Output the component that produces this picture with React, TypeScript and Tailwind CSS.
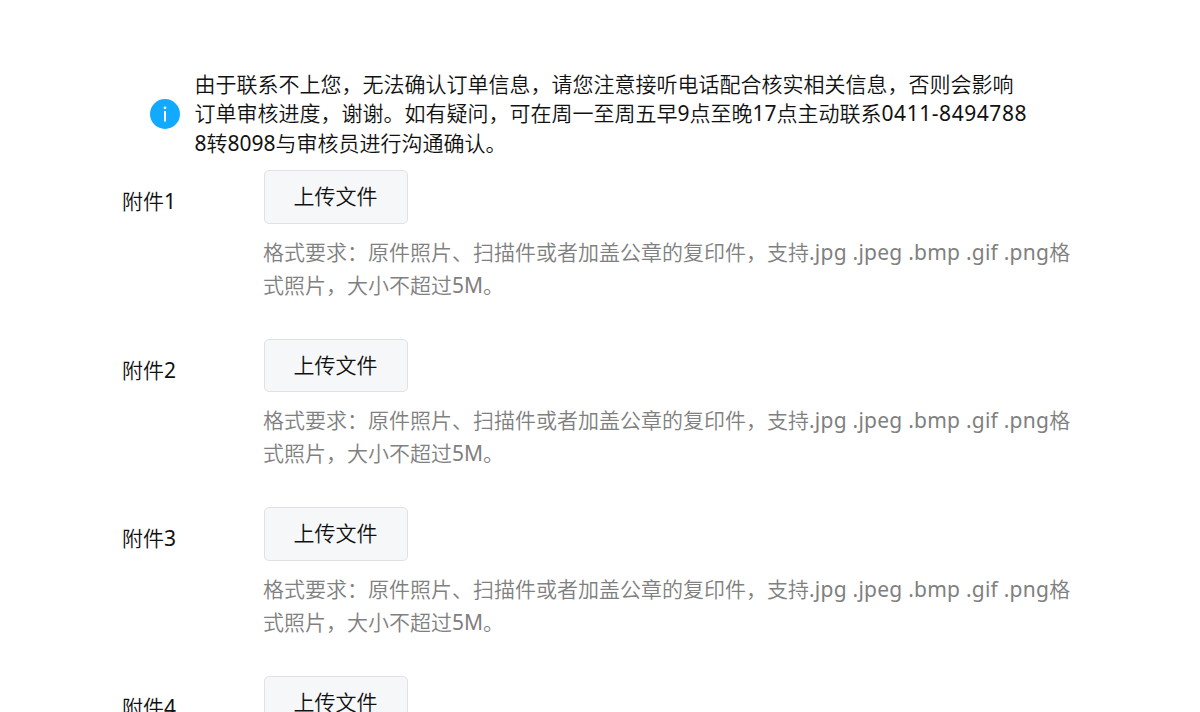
const ATTACHMENTS = [1, 2, 3, 4];

function InfoIcon() {
  return (
    <svg className="w-[30px] h-[30px] shrink-0" viewBox="0 0 30 30">
      <circle cx="15" cy="15" r="15" fill="#12aaff" />
      <circle cx="15" cy="8.8" r="1.4" fill="#fff" />
      <rect x="14" y="12" width="2" height="10.5" fill="#fff" />
    </svg>
  );
}

function AttachmentRow({ index }: { index: number }) {
  return (
    <div className="flex h-[168.5px] pl-[122px]">
      <div className="w-[142px] shrink-0 pt-[15px] leading-8">附件{index}</div>
      <div className="w-[820px]">
        <button className="block w-36 h-[53.5px] pr-px rounded-[5px] border border-[#dfe1e5] bg-[#f6f7f9]">
          上传文件
        </button>
        <p className="mt-3 -ml-px leading-[33.3px] whitespace-nowrap text-[#808080]">
          格式要求：原件照片、扫描件或者加盖公章的复印件，支持
          <span className="tracking-[0.24px]">.jpg .jpeg .bmp .gif .png</span>格
          <br />
          式照片，大小不超过5M。
        </p>
      </div>
    </div>
  );
}

export default function App() {
  return (
    <div
      lang="zh-CN"
      className="h-[712px] overflow-hidden bg-white text-[21px] text-[#111] font-['Noto_Sans','Noto_Sans_CJK_SC_DemiLight','Noto_Sans_CJK_SC_Light','Noto_Sans_CJK_SC',sans-serif]"
    >
      <div className="flex items-center gap-[14.5px] pt-[70px] pl-[150px]">
        <InfoIcon />
        <p className="leading-[29.4px] whitespace-nowrap">
          由于联系不上您，无法确认订单信息，请您注意接听电话配合核实相关信息，否则会影响
          <br />
          订单审核进度，谢谢。如有疑问，可在周一至周五早9点至晚17点主动联系
          <span className="tracking-[0.55px]">0411-8494788</span>
          <br />
          8转8098与审核员进行沟通确认。
        </p>
      </div>
      <div className="pt-[11.8px]">
        {ATTACHMENTS.map((n) => (
          <AttachmentRow key={n} index={n} />
        ))}
      </div>
    </div>
  );
}
